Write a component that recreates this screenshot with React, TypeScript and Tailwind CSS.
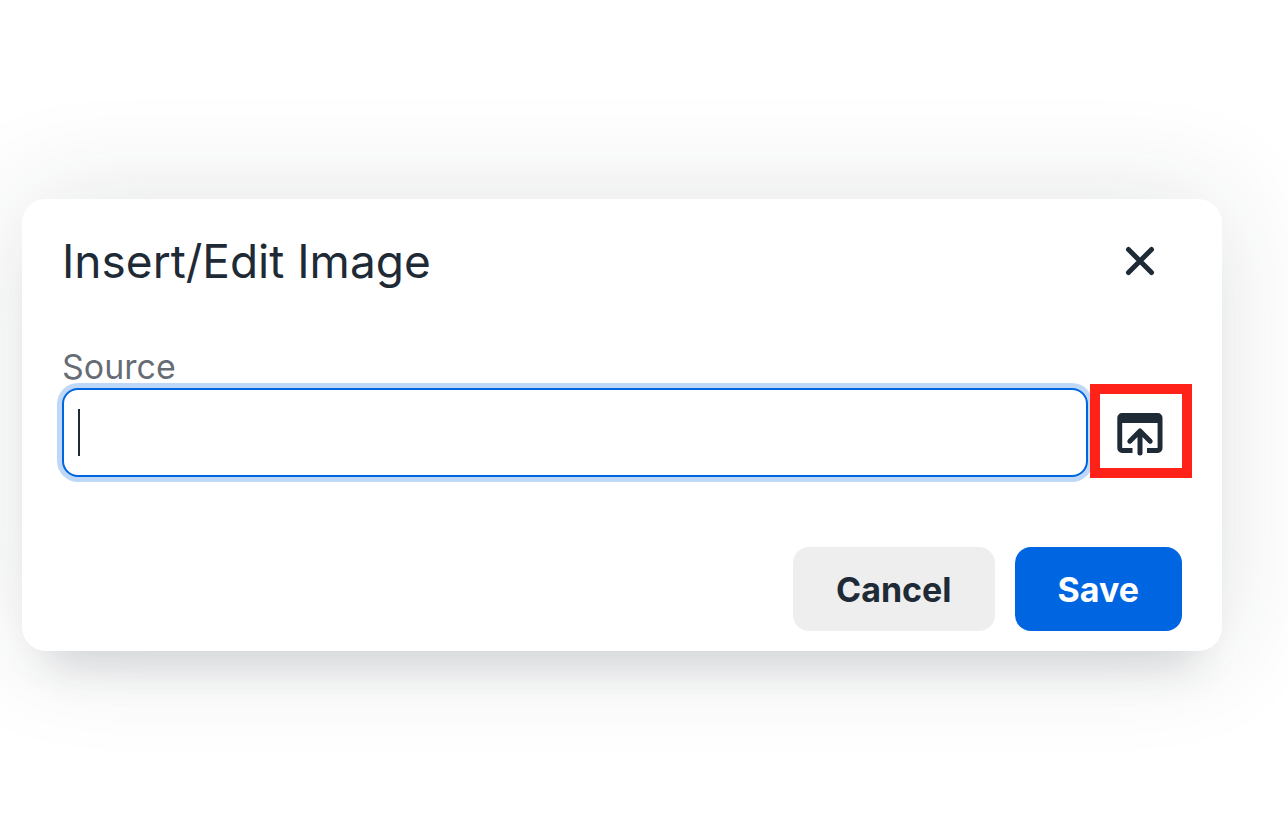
import { useState } from "react";

function CloseIcon() {
  return (
    <svg width="30" height="30" viewBox="0 0 30 30" fill="none" stroke="currentColor" strokeWidth="5" strokeLinecap="round" aria-hidden="true">
      <path d="M3.500 3.500l23 23M26.500 3.500l-23 23" />
    </svg>
  );
}

function BrowseIcon() {
  return (
    <svg width="48" height="44" viewBox="0 0 48 44" fill="none" aria-hidden="true">
      <path
        fill="currentColor"
        fillRule="evenodd"
        d="M5 0h35.800A4.700 4.700 0 0 1 45.500 4.700V35.300A4.700 4.700 0 0 1 40.800 40H30v-5H40.600V10H5.200V35H15.500v5H5A4.700 4.700 0 0 1 .3 35.300V4.700A4.700 4.700 0 0 1 5 0z"
      />
      <path stroke="currentColor" strokeWidth="5" strokeLinecap="round" strokeLinejoin="round" d="M23 40V18.500M12.800 28.200L23 18l10.200 10.200" />
    </svg>
  );
}

export default function App() {
  const [source, setSource] = useState("");

  return (
    <div className="min-h-screen overflow-hidden bg-white pt-[199px] pr-[66px] pb-16 pl-[22px] font-['Inter',sans-serif] text-[#1f2a37]">
      <div
        role="dialog"
        aria-labelledby="dialog-title"
        className="rounded-3xl bg-white shadow-[0_40px_40px_-25px_rgba(31,42,55,0.14),0_0_110px_3px_rgba(31,42,50,0.12)]"
      >
        <header className="flex items-center justify-between px-10 pt-5">
          <h1 id="dialog-title" className="text-[46px] leading-[84px]">
            Insert/Edit Image
          </h1>
          <button type="button" aria-label="Close" className="flex size-[84px] items-center justify-center rounded-2xl">
            <CloseIcon />
          </button>
        </header>

        <div className="flex items-end gap-0.5 pt-[43px] pr-[30px] pl-10">
          <div className="min-w-0 flex-1 pb-px">
            <label htmlFor="source" className="block text-[34px] leading-[42px] text-[#1f2a37]/70">
              Source
            </label>
            <div className="relative">
              <input
                id="source"
                type="text"
                value={source}
                onChange={(e) => setSource(e.target.value)}
                className="block h-[89px] w-full rounded-2xl border-2 border-[#0065e0] bg-white px-3.5 text-[34px] caret-transparent ring-5 ring-[#0065e0]/25 outline-none"
              />
              {source === "" && <span className="pointer-events-none absolute top-[21px] left-4 h-[47px] w-0.5 bg-[#1f2a37]" />}
            </div>
          </div>
          <button
            type="button"
            aria-label="Browse files"
            className="relative flex h-[94px] w-[102px] items-center justify-center border-10 border-[#ff2218] bg-white pt-2"
          >
            <BrowseIcon />
          </button>
        </div>

        <footer className="flex justify-end gap-5 px-10 pt-[69px] pb-5">
          <button type="button" className="h-[84px] rounded-2xl bg-[#eeeeee] px-[43px] text-[34px] font-bold">
            Cancel
          </button>
          <button type="button" className="h-[84px] rounded-2xl bg-[#0065e0] px-[43px] text-[34px] font-bold text-white">
            Save
          </button>
        </footer>
      </div>
    </div>
  );
}
